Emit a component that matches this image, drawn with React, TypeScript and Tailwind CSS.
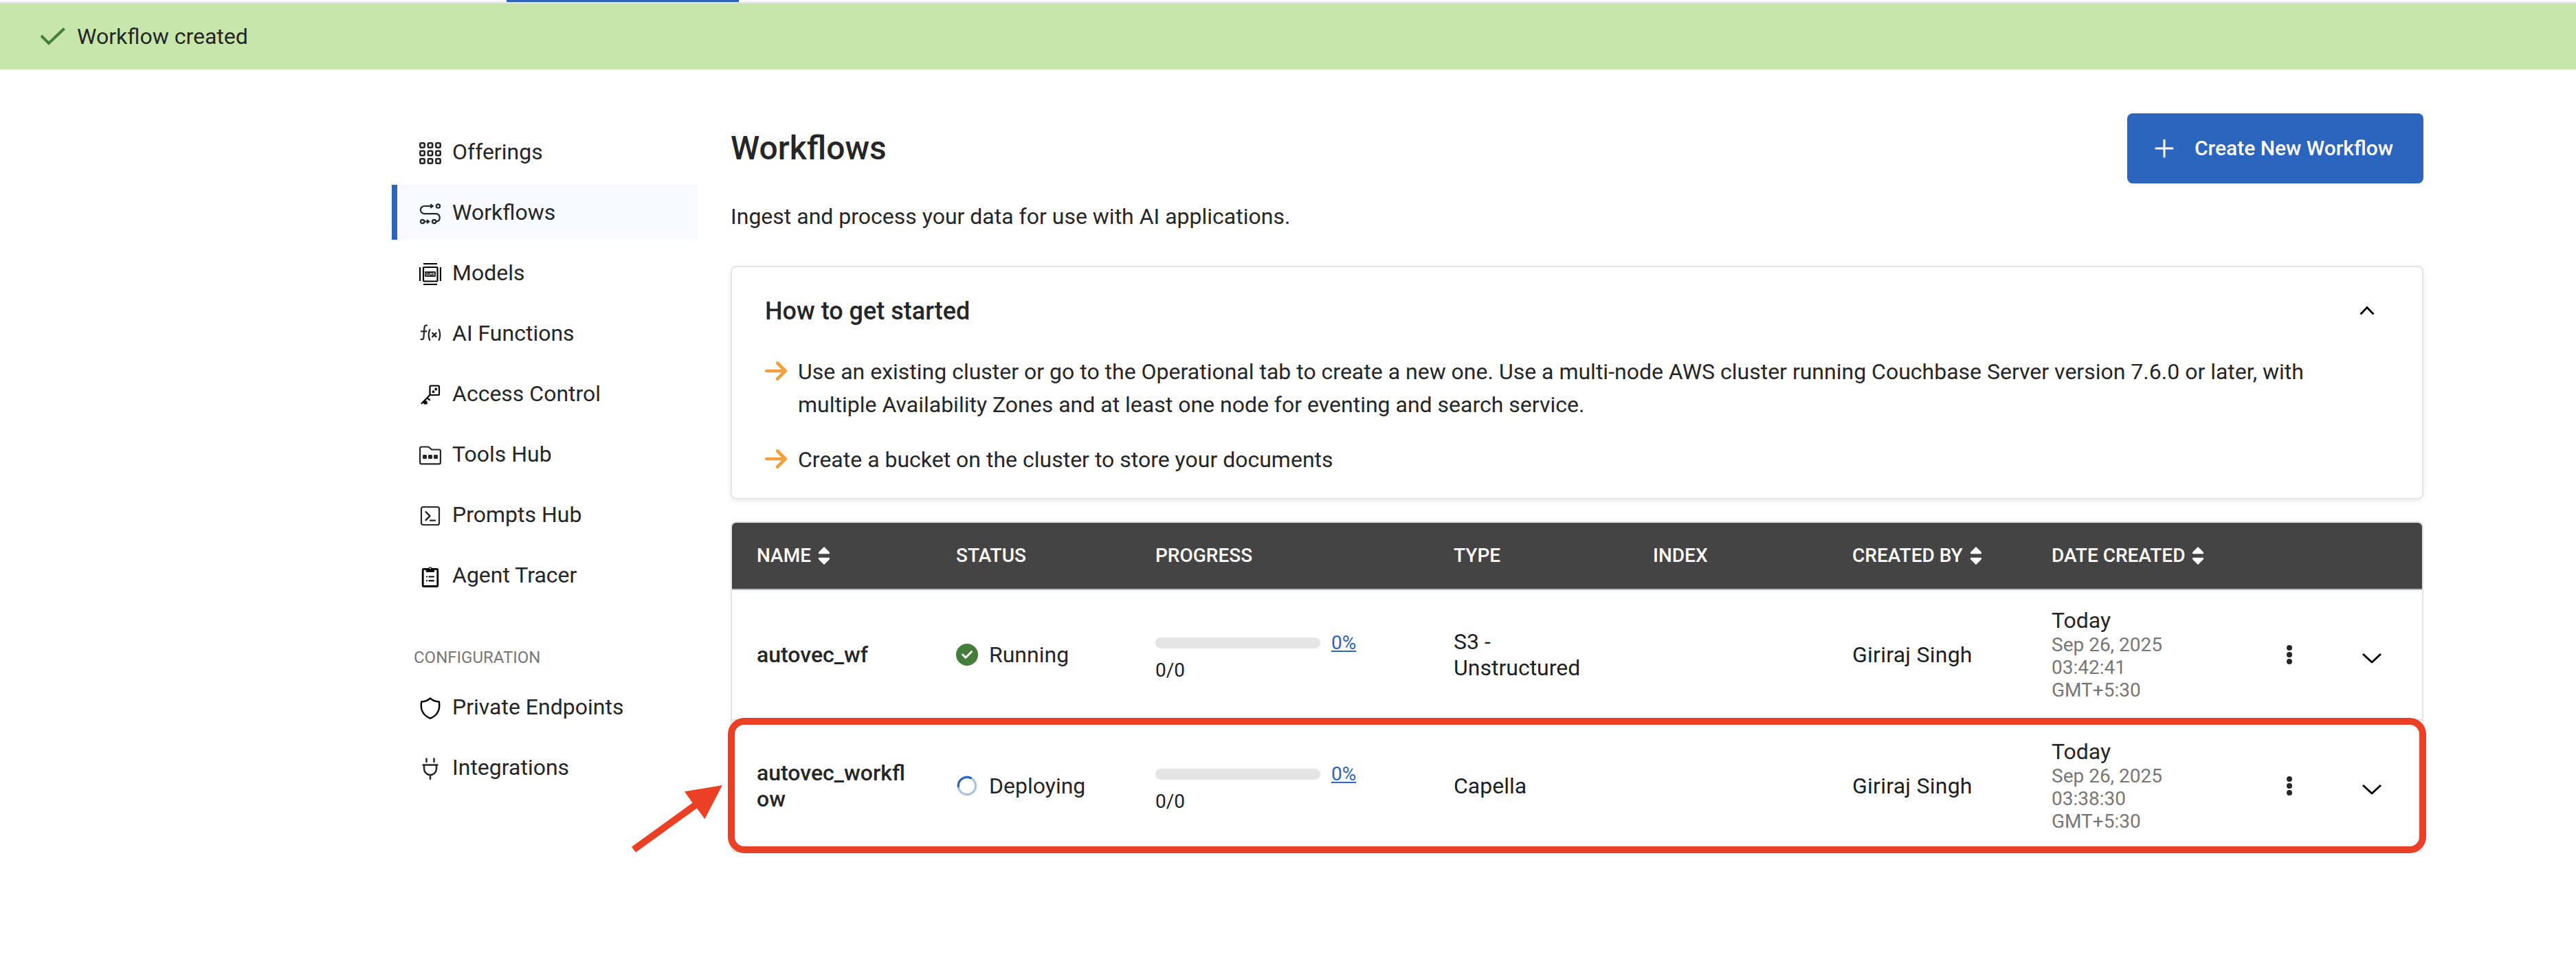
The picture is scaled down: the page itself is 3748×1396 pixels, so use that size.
import React from "react";

type IconProps = { children: React.ReactNode; color?: string };

function NavIcon({ children, color = "#262626" }: IconProps) {
  return (
    <svg viewBox="0 0 32 32" className="mt-1 size-8 shrink-0" fill="none" stroke={color} strokeWidth="2.200" strokeLinecap="round" strokeLinejoin="round">
      {children}
    </svg>
  );
}

const gridCells = [4.5, 16, 27.5];

const icons = {
  offerings: (
    <NavIcon>
      {gridCells.map((y) =>
        gridCells.map((x) => (
          <rect key={`${x}-${y}`} x={x - 3.2} y={y - 3.2} width="6.4" height="6.4" rx="1.6" strokeWidth="2.6" />
        )),
      )}
    </NavIcon>
  ),
  workflows: (
    <NavIcon>
      <path d="M19 5H7.500a5.600 5.600 0 0 0 0 11.200H24.500a5.800 5.800 0 0 1 1.500 11.200" />
      <path d="M17 2.200 20.800 5 17 7.800zM11.800 24.800 15.400 27.500 11.800 30.200z" fill="#262626" strokeWidth="1" />
      <path d="M8 27.500h4" />
      <circle cx="27.400" cy="5" r="2.700" />
      <circle cx="4.700" cy="27.500" r="2.700" />
      <circle cx="21.700" cy="27.500" r="2.700" />
    </NavIcon>
  ),
  models: (
    <NavIcon color="#000">
      <rect x="6" y="6" width="20.500" height="20.500" rx="1" />
      <path d="M6 1H26M6 31H26M1 6V26M31 6V26" strokeLinecap="butt" />
      <rect x="8.200" y="12.200" width="15.600" height="7.600" fill="#000" stroke="none" />
      <path d="M10 14v3.700h1.600M12.800 14v3.700h1.600M15.600 17.700v-3.500l1.300 2 1.300-2v3.500M22 14.200h-2v1.700h2v1.800h-2" stroke="#fff" strokeWidth=".9" />
    </NavIcon>
  ),
  functions: (
    <NavIcon>
      <path d="M11 2.600C8.800 2.200 7.700 3.200 7.500 5.500L6.400 20.500c-.2 2.300-1.600 3-3.900 2.400M3 11.300h7.500" />
      <path d="M15.300 8.800q-3.300 7.600 0 15.200M28.600 8.800q3.300 7.600 0 15.200" />
      <path d="M19.300 13.800l5.200 5.400M24.500 13.800l-5.200 5.400" strokeWidth="2.400" />
    </NavIcon>
  ),
  access: (
    <NavIcon color="#000">
      <rect x="15.500" y="2.500" width="13.500" height="13.500" rx="1.500" />
      <path d="M15.500 16 3.500 28.200M11.500 20.500l3.500 2.500M7.500 24.500l3 3" />
      <path d="M6.500 25.500h4v3h-3z" fill="#000" />
      <circle cx="20.500" cy="11.200" r=".8" fill="#000" />
      <circle cx="24.200" cy="7.500" r=".8" fill="#000" />
    </NavIcon>
  ),
  tools: (
    <NavIcon>
      <path d="M1.100 5.700a2.200 2.200 0 0 1 2.200-2.200H12.500a3 3 0 0 1 2.200 1L18 7.500h10.700a2.200 2.200 0 0 1 2.200 2.200V26.200a2.200 2.200 0 0 1-2.200 2.200H3.300A2.200 2.200 0 0 1 1.100 26.200z" />
      <g fill="#262626" stroke="none">
        <rect x="5" y="15" width="6" height="6" rx="1.400" />
        <rect x="13" y="15" width="6" height="6" rx="1.400" />
        <rect x="21" y="15" width="6" height="6" rx="1.400" />
      </g>
    </NavIcon>
  ),
  prompts: (
    <NavIcon>
      <rect x="3" y="3" width="26" height="26" rx="2.500" />
      <path d="M9.500 10.200l6 6-6 6M16 22.600h7" strokeWidth="2.400" />
    </NavIcon>
  ),
  tracer: (
    <NavIcon color="#000">
      <rect x="5.200" y="5.300" width="21.600" height="25.200" rx="1.600" strokeWidth="2.800" />
      <path d="M10.500 5h2.600a3 3 0 0 1 5.800 0h2.600v4.300h-11z" fill="#000" strokeWidth="1" />
      <circle cx="16" cy="4.200" r="1" fill="#fff" stroke="none" />
      <path d="M14.500 16.500h6.500M14.500 22.300h6.500M11 16.500h.1M11 22.300h.1" />
    </NavIcon>
  ),
  endpoints: (
    <NavIcon color="#000">
      <path d="M16 1.500C12 5 7 6.300 3.200 6.500 1.500 17 4.500 26 16 30.700 27.500 26 30.500 17 28.800 6.500 25 6.300 20 5 16 1.500z" strokeWidth="2.400" />
    </NavIcon>
  ),
  integrations: (
    <NavIcon>
      <path d="M10.500 1.500v4.500M21.500 1.500v4.500M5.500 10.500h21M7 10.500V16a9 9 0 0 0 18 0v-5.500M16 25v6" strokeWidth="2.500" />
    </NavIcon>
  ),
};

function NavItem({ icon, label, active = false }: { icon: React.ReactNode; label: string; active?: boolean }) {
  return (
    <a className={`flex h-20 items-center gap-4 border-l-8 pl-8 ${active ? "border-[#2b65bd] bg-[#f8faff]" : "border-transparent"}`}>
      {icon}
      <span>{label}</span>
    </a>
  );
}

function SortIcon() {
  return (
    <svg viewBox="0 0 18 28" className="h-7 w-[18px]" fill="#fff">
      <path d="M9 1 16.800 8.700Q17.800 11 16 11.200H2Q.2 11 1.200 8.700zM9 27 1.200 19.300Q.2 17 2 16.800H16Q17.800 17 16.800 19.300z" />
    </svg>
  );
}

function ArrowRight() {
  return (
    <svg viewBox="0 0 32 28" className="mt-[9px] h-7 w-8 shrink-0" fill="none" stroke="#f0a03c" strokeWidth="4.600" strokeLinecap="round" strokeLinejoin="round">
      <path d="M2.300 14H29M18.200 2.500 29.700 14 18.200 25.500" />
    </svg>
  );
}

const columns = [
  { label: "NAME", sortable: true },
  { label: "STATUS" },
  { label: "PROGRESS" },
  { label: "TYPE" },
  { label: "INDEX" },
  { label: "CREATED BY", sortable: true },
  { label: "DATE CREATED", sortable: true },
];

const tableGrid = "grid grid-cols-[290px_290px_434px_290px_290px_290px_290px_161px_1fr] pl-9";

const rows = [
  { name: "autovec_wf", status: "Running", type: "S3 - Unstructured", time: "03:42:41" },
  { name: "autovec_workflow", status: "Deploying", type: "Capella", time: "03:38:30" },
];

function StatusIcon({ status }: { status: string }) {
  if (status === "Running") {
    return (
      <svg viewBox="0 0 32 32" className="size-8">
        <circle cx="16" cy="16" r="16" fill="#457d3a" />
        <path d="M9.700 16 14 20.300 22.500 11.700" fill="none" stroke="#fff" strokeWidth="3" strokeLinecap="round" strokeLinejoin="round" />
      </svg>
    );
  }
  return (
    <svg viewBox="0 0 32 32" className="size-8" fill="none" strokeWidth="3.200">
      <circle cx="16" cy="16" r="12.600" stroke="#a9c1e5" />
      <path d="M3.500 18A12.600 12.600 0 0 1 22.500 5.200" stroke="#2b65bd" />
    </svg>
  );
}

export default function App() {
  return (
    <div className="relative h-[1396px] w-[3748px] overflow-hidden bg-white font-[Roboto,sans-serif] text-[32px] leading-[38px] text-[#262626]">
      <div className="h-[5px] border-b-2 border-[#e4e4e4] bg-[#f9f9f9]">
        <div className="ml-[737px] h-[3px] w-[338px] bg-[#2b65bd]" />
      </div>
      <div className="flex h-24 items-center gap-4 bg-[#c7e6ab] pl-[58px]">
        <svg viewBox="0 0 38 26" className="h-[26px] w-[38px]" fill="none" stroke="#457d3a" strokeWidth="4">
          <path d="M2 12 13 23 35.500 1.500" />
        </svg>
        <span>Workflow created</span>
      </div>

      <div className="flex pl-[570px]">
        <nav className="mt-20 flex w-[445px] shrink-0 flex-col gap-2">
          <NavItem icon={icons.offerings} label="Offerings" />
          <NavItem icon={icons.workflows} label="Workflows" active />
          <NavItem icon={icons.models} label="Models" />
          <NavItem icon={icons.functions} label="AI Functions" />
          <NavItem icon={icons.access} label="Access Control" />
          <NavItem icon={icons.tools} label="Tools Hub" />
          <NavItem icon={icons.prompts} label="Prompts Hub" />
          <NavItem icon={icons.tracer} label="Agent Tracer" />
          <h2 className="mt-[52px] mb-2 h-9 pl-8 text-[24px] leading-10 text-[#777]">CONFIGURATION</h2>
          <NavItem icon={icons.endpoints} label="Private Endpoints" />
          <NavItem icon={icons.integrations} label="Integrations" />
        </nav>

        <main className="ml-12 w-[2463px]">
          <header className="mt-16 flex h-[102px] items-center justify-between">
            <h1 className="text-[48px] font-medium">Workflows</h1>
            <button className="flex h-[102px] w-[431px] items-center rounded-lg bg-[#2b65bd] pl-10 text-[30px] font-medium text-white">
              <svg viewBox="0 0 28 28" className="size-7" stroke="#fff" strokeWidth="3" strokeLinecap="round">
                <path d="M14 2V26M2 14H26" />
              </svg>
              <span className="ml-[30px] whitespace-nowrap">Create New Workflow</span>
            </button>
          </header>
          <p className="mt-[29px]">Ingest and process your data for use with AI applications.</p>

          <section className="mt-[53px] h-[340px] rounded-lg border-2 border-[#e4e4e4] px-12 pt-[45px] shadow-[0_2px_8px_rgba(0,0,0,0.08)]">
            <div className="flex items-center justify-between">
              <h2 className="text-[36px] font-medium">How to get started</h2>
              <svg viewBox="0 0 22 14" className="mr-[21px] mb-0.5 h-[14px] w-[22px]" fill="none" stroke="#000" strokeWidth="2.800">
                <path d="M1.500 12.500 11 2.500 20.500 12.500" />
              </svg>
            </div>
            <ul className="mt-[45px] flex flex-col gap-8 leading-[48px]">
              <li className="flex gap-4">
                <ArrowRight />
                <span className="w-[2210px]">
                  Use an existing cluster or go to the Operational tab to create a new one. Use a multi-node AWS cluster running Couchbase Server version 7.6.0 or later, with multiple Availability Zones and at least one node for eventing and search service.
                </span>
              </li>
              <li className="flex gap-4">
                <ArrowRight />
                <span>Create a bucket on the cluster to store your documents</span>
              </li>
            </ul>
          </section>

          <section className="relative mt-8 h-[482px] rounded-lg border-2 border-[#e4e4e4]">
            <div className={`${tableGrid} h-[98px] items-center rounded-t-md border-b-2 border-[#b4bac2] bg-[#444] text-[28px] font-medium text-white`}>
              {columns.map((c) => (
                <div key={c.label} className="flex items-center gap-2.5 whitespace-nowrap">
                  {c.label}
                  {c.sortable && <SortIcon />}
                </div>
              ))}
            </div>
            {rows.map((r, i) => (
              <div key={r.name} className={`${tableGrid} h-[190px] items-center ${i === 0 ? "border-b-2 border-[#dfe2e8]" : ""}`}>
                <div className="w-[218px] font-medium break-all">{r.name}</div>
                <div className="flex items-center gap-4">
                  <StatusIcon status={r.status} />
                  {r.status}
                </div>
                <div className="pt-[6px] text-[28px] leading-10">
                  <div className="flex items-center gap-4">
                    <div className="h-4 w-60 rounded-lg bg-[#e4e4e4]" />
                    <a className="text-[#2b65bd] underline">0%</a>
                  </div>
                  <div className="text-[#1b1f23]">0/0</div>
                </div>
                <div className="w-[218px] text-[#1b1f23]">{r.type}</div>
                <div />
                <div className="tracking-[0.25px] text-[#1b1f23]">Giriraj Singh</div>
                <div className="mb-0.5">
                  <div>Today</div>
                  <div className="w-[180px] text-[28px] leading-[33px] text-[#777]">Sep 26, 2025 {r.time} GMT+5:30</div>
                </div>
                <svg viewBox="0 0 8 28" className="ml-[52px] h-7 w-2" fill="#262626">
                  <circle cx="4" cy="4" r="4" />
                  <circle cx="4" cy="14" r="4" />
                  <circle cx="4" cy="24" r="4" />
                </svg>
                <svg viewBox="0 0 30 18" className="mt-[9px] h-[18px] w-[30px]" fill="none" stroke="#000" strokeWidth="3" strokeLinejoin="round">
                  <path d="M2 3 15 15 28 3" />
                </svg>
              </div>
            ))}
            <div className="pointer-events-none absolute -inset-x-1.5 top-[284px] h-[197px] rounded-3xl border-[10px] border-[#ea4025]" />
            <svg viewBox="0 0 134 100" className="absolute top-[380px] -left-[147px] h-[100px] w-[134px]" fill="#ea4025">
              <path d="M133 2 78 11.300 89.500 27.700 1 91.700 7 99.700 96 35.500 107.400 51.300z" />
            </svg>
          </section>
        </main>
      </div>
    </div>
  );
}
